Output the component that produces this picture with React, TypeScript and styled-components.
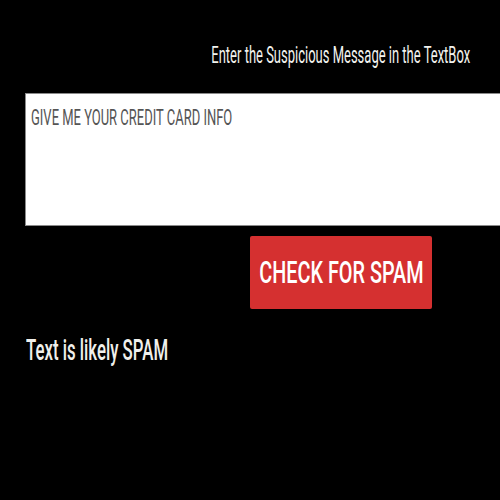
import styled, { createGlobalStyle } from "styled-components"

const Global = createGlobalStyle`
    html, body {
        margin: 0;
        padding: 0;
        background: #000;
        overflow: hidden;
    }
`

export default function App() {
    return (
        <>
            <Global />
            <Page>
                <Header>
                    <Squeeze $origin="right" $scale={0.565}>Enter the Suspicious Message in the TextBox</Squeeze>
                </Header>
                <MessageBox>
                    <Squeeze $origin="left" $scale={0.59}>GIVE ME YOUR CREDIT CARD INFO</Squeeze>
                </MessageBox>
                <ButtonRow>
                    <CheckButton>
                        <Squeeze $origin="center" $scale={0.64}>CHECK FOR SPAM</Squeeze>
                    </CheckButton>
                </ButtonRow>
                <Result>
                    <Squeeze $origin="left" $scale={0.56}>Text is likely SPAM</Squeeze>
                </Result>
            </Page>
        </>
    )
}

const Page = styled.div`
    width: 500px;
    height: 500px;
    box-sizing: border-box;
    padding-top: 44px;
    background: #000;
    display: flex;
    flex-direction: column;
    font-family: Roboto, "Liberation Sans", sans-serif;
    overflow: hidden;
`

// the screenshot is squeezed sideways, so every label is narrowed
const Squeeze = styled.span<{ $origin: string; $scale: number }>`
    display: inline-block;
    white-space: nowrap;
    transform: scaleX(${p => p.$scale});
    transform-origin: ${p => p.$origin} center;
`

const Header = styled.div`
    display: flex;
    justify-content: flex-end;
    padding-right: 30px;
    color: #f2f2ee;
    font-size: 23px;
    line-height: 23px;
`

const MessageBox = styled.div`
    margin: 26px -20px 0 25px;
    height: 133px;
    box-sizing: border-box;
    border: 1px solid #8a8a8a;
    background: #fff;
    padding: 13px 5px;
    color: #555;
    font-size: 22px;
    line-height: 22px;
`

const ButtonRow = styled.div`
    display: flex;
    padding-left: 250px;
    margin-top: 10px;
`

const CheckButton = styled.button`
    width: 182px;
    height: 73px;
    border: none;
    border-radius: 2px;
    background: #d53030;
    color: #fff;
    font-family: Roboto, "Liberation Sans", sans-serif;
    font-size: 31px;
    font-weight: 500;
    padding: 0;
    display: flex;
    align-items: center;
    justify-content: center;
    cursor: pointer;
`

const Result = styled.div`
    margin-top: 26px;
    padding-left: 26px;
    color: #f0f0ec;
    font-size: 30px;
    font-weight: 500;
    line-height: 30px;
`
